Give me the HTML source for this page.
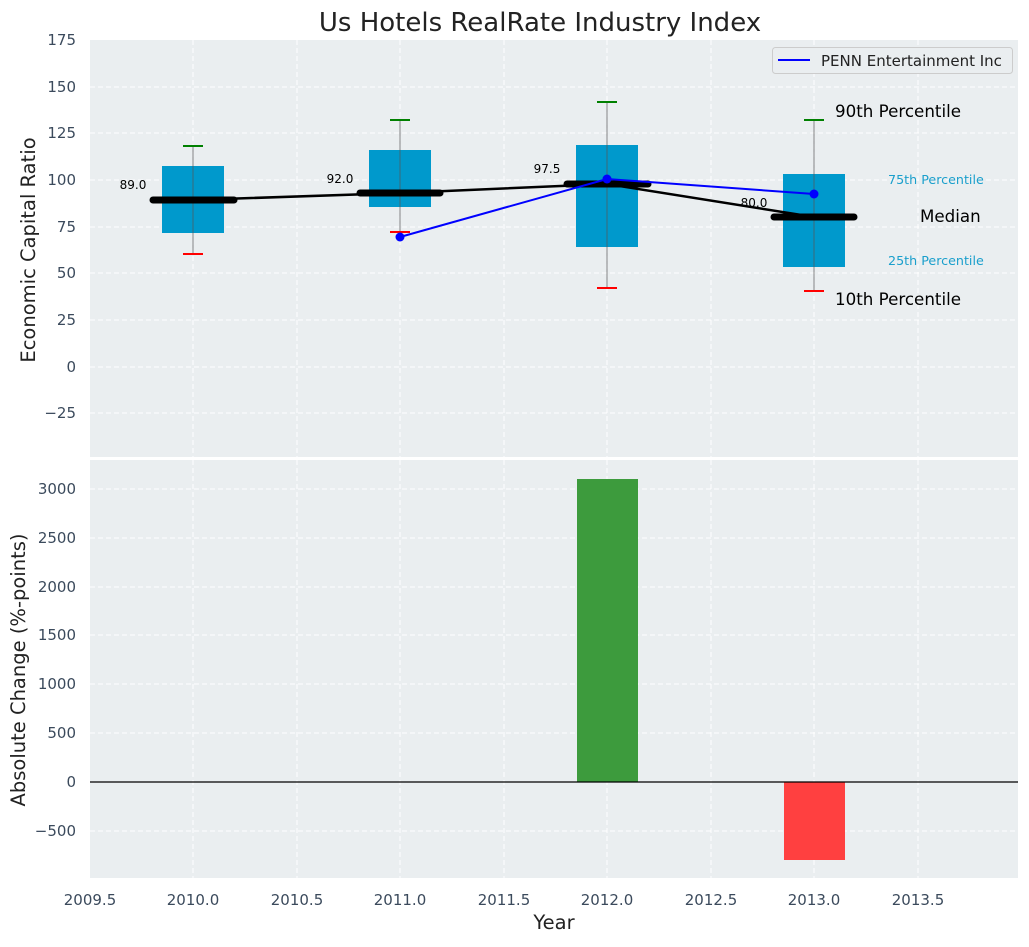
<!DOCTYPE html>
<html><head><meta charset="utf-8"><style>
body{margin:0;background:#fff;}
svg text{font-family:"DejaVu Sans","Liberation Sans",sans-serif;}
</style></head><body>
<svg width="1029" height="942" xmlns="http://www.w3.org/2000/svg">
<rect width="1029" height="942" fill="#fff"/>
<text x="540" y="31" font-size="26" fill="#222" text-anchor="middle">Us Hotels RealRate Industry Index</text>
<!-- top axes -->
<rect x="90" y="40" width="928" height="417" fill="#eaeef0"/>
<g stroke="#fff" stroke-width="1" stroke-dasharray="5,3">
<line x1="90" x2="1018" y1="87" y2="87"/><line x1="90" x2="1018" y1="133" y2="133"/>
<line x1="90" x2="1018" y1="180" y2="180"/><line x1="90" x2="1018" y1="227" y2="227"/>
<line x1="90" x2="1018" y1="273" y2="273"/><line x1="90" x2="1018" y1="320" y2="320"/>
<line x1="90" x2="1018" y1="367" y2="367"/><line x1="90" x2="1018" y1="413" y2="413"/>
<line y1="40" y2="457" x1="193" x2="193"/><line y1="40" y2="457" x1="297" x2="297"/>
<line y1="40" y2="457" x1="400" x2="400"/><line y1="40" y2="457" x1="504" x2="504"/>
<line y1="40" y2="457" x1="607" x2="607"/><line y1="40" y2="457" x1="711" x2="711"/>
<line y1="40" y2="457" x1="814" x2="814"/><line y1="40" y2="457" x1="918" x2="918"/>
</g>
<g fill="#3b4a5c" font-size="15" text-anchor="end">
<text x="76" y="45">175</text><text x="76" y="92">150</text><text x="76" y="138">125</text>
<text x="76" y="185">100</text><text x="76" y="232">75</text><text x="76" y="278">50</text>
<text x="76" y="325">25</text><text x="76" y="372">0</text><text x="76" y="418">−25</text>
</g>
<text transform="translate(35,250) rotate(-90)" font-size="19.5" fill="#222" text-anchor="middle">Economic Capital Ratio</text>
<!-- boxes -->
<g fill="#0099cc">
<rect x="162" y="166" width="62" height="67"/><rect x="369" y="150" width="62" height="57"/>
<rect x="576" y="145" width="62" height="102"/><rect x="783" y="174" width="62" height="93"/>
</g>
<g stroke="#555" stroke-width="1" opacity="0.7">
<line x1="193" x2="193" y1="146" y2="254"/><line x1="400" x2="400" y1="120" y2="232"/>
<line x1="607" x2="607" y1="102" y2="288"/><line x1="814" x2="814" y1="120" y2="291"/>
</g>
<g stroke="green" stroke-width="2">
<line x1="183" x2="203" y1="146" y2="146"/><line x1="390" x2="410" y1="120" y2="120"/>
<line x1="597" x2="617" y1="102" y2="102"/><line x1="804" x2="824" y1="120" y2="120"/>
</g>
<g stroke="red" stroke-width="2">
<line x1="183" x2="203" y1="254" y2="254"/><line x1="390" x2="410" y1="232" y2="232"/>
<line x1="597" x2="617" y1="288" y2="288"/><line x1="804" x2="824" y1="291" y2="291"/>
</g>
<polyline points="193,200 400,193 607,184 814,217" fill="none" stroke="#000" stroke-width="2.5"/>
<g stroke="#000" stroke-width="7" stroke-linecap="round">
<line x1="153" x2="234" y1="200" y2="200"/><line x1="360" x2="440" y1="193" y2="193"/>
<line x1="567" x2="648" y1="184" y2="184"/><line x1="774" x2="854" y1="217" y2="217"/>
</g>
<polyline points="400,237 607,179 814,194" fill="none" stroke="#0000ff" stroke-width="2"/>
<g fill="#0000ff"><circle cx="400" cy="237" r="4.5"/><circle cx="607" cy="179" r="4.5"/><circle cx="814" cy="194" r="4.5"/></g>
<g font-size="12" fill="#000" text-anchor="middle">
<text x="133" y="189">89.0</text><text x="340" y="183">92.0</text>
<text x="547" y="173">97.5</text><text x="754" y="207">80.0</text>
</g>
<g font-size="16.7" fill="#000">
<text x="835" y="117">90th Percentile</text><text x="835" y="305">10th Percentile</text>
<text x="920" y="222">Median</text>
</g>
<g font-size="12.7" fill="#1a9fcc">
<text x="888" y="184">75th Percentile</text><text x="888" y="265">25th Percentile</text>
</g>
<rect x="772.5" y="47.5" width="240" height="26" rx="3" fill="#eaeef0" stroke="#ccc"/>
<line x1="778" x2="810" y1="60" y2="60" stroke="#0000ff" stroke-width="2"/>
<text x="821" y="66" font-size="15" fill="#222">PENN Entertainment Inc</text>
<!-- bottom axes -->
<rect x="90" y="460" width="928" height="418" fill="#eaeef0"/>
<g stroke="#fff" stroke-width="1" stroke-dasharray="5,3">
<line x1="90" x2="1018" y1="489" y2="489"/><line x1="90" x2="1018" y1="538" y2="538"/>
<line x1="90" x2="1018" y1="587" y2="587"/><line x1="90" x2="1018" y1="635" y2="635"/>
<line x1="90" x2="1018" y1="684" y2="684"/><line x1="90" x2="1018" y1="733" y2="733"/>
<line x1="90" x2="1018" y1="831" y2="831"/>
<line y1="460" y2="878" x1="193" x2="193"/><line y1="460" y2="878" x1="297" x2="297"/>
<line y1="460" y2="878" x1="400" x2="400"/><line y1="460" y2="878" x1="504" x2="504"/>
<line y1="460" y2="878" x1="607" x2="607"/><line y1="460" y2="878" x1="711" x2="711"/>
<line y1="460" y2="878" x1="814" x2="814"/><line y1="460" y2="878" x1="918" x2="918"/>
</g>
<rect x="577" y="479" width="61" height="303" fill="#3d9b3d"/>
<rect x="784" y="782" width="61" height="78" fill="#ff4040"/>
<line x1="90" x2="1018" y1="782" y2="782" stroke="#000" stroke-width="1.2"/>
<g fill="#3b4a5c" font-size="15" text-anchor="end">
<text x="76" y="494">3000</text><text x="76" y="543">2500</text><text x="76" y="592">2000</text>
<text x="76" y="640">1500</text><text x="76" y="689">1000</text><text x="76" y="738">500</text>
<text x="76" y="787">0</text><text x="76" y="836">−500</text>
</g>
<text transform="translate(25,670) rotate(-90)" font-size="19.5" fill="#222" text-anchor="middle">Absolute Change (%-points)</text>
<g fill="#3b4a5c" font-size="15" text-anchor="middle">
<text x="90" y="905">2009.5</text><text x="193" y="905">2010.0</text><text x="297" y="905">2010.5</text>
<text x="400" y="905">2011.0</text><text x="504" y="905">2011.5</text><text x="607" y="905">2012.0</text>
<text x="711" y="905">2012.5</text><text x="814" y="905">2013.0</text><text x="918" y="905">2013.5</text>
</g>
<text x="554" y="929" font-size="19.5" fill="#222" text-anchor="middle">Year</text>
</svg>
</body></html>
